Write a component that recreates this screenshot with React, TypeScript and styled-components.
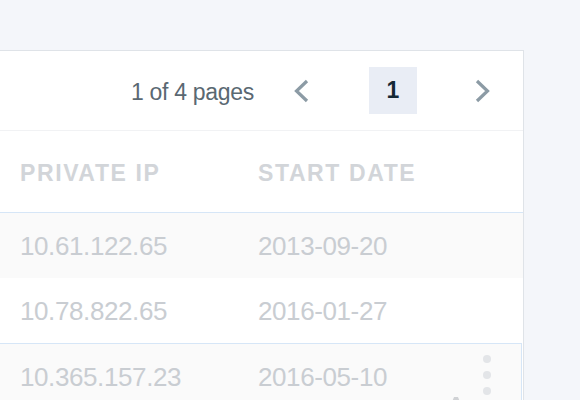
import React from "react";
import styled, { createGlobalStyle } from "styled-components";

const Global = createGlobalStyle`
  html, body { margin: 0; padding: 0; background: #f4f6fa; }
  body { font-family: "Liberation Sans", Arial, sans-serif; width: 580px; height: 400px; overflow: hidden; }
`;

const Page = styled.div`
  padding-top: 50px;
`;

const Panel = styled.section`
  width: 523px;
  background: #ffffff;
  border: 1px solid #dfe3e8;
  border-left: none;
  border-bottom: none;
  height: 360px;
  overflow: hidden;
`;

const Toolbar = styled.div`
  height: 79px;
  display: flex;
  align-items: center;
  justify-content: flex-end;
  padding-right: 16px;
  border-bottom: 1px solid #f1f2f4;
`;

const PageInfo = styled.span`
  font-size: 23px;
  color: #5a6872;
  margin-right: 23px;
  letter-spacing: -0.3px;
  padding-top: 3px;
`;

const NavButton = styled.button<{ $ml?: number }>`
  width: 48px;
  height: 47px;
  border: none;
  background: transparent;
  display: flex;
  align-items: center;
  justify-content: center;
  padding: 0;
  margin-left: ${(p) => p.$ml ?? 0}px;
`;

const PageBox = styled.div`
  width: 48px;
  height: 47px;
  margin-left: 44px;
  background: #e9edf5;
  display: flex;
  align-items: center;
  justify-content: center;
  font-size: 23px;
  font-weight: 700;
  color: #152935;
`;

const Row = styled.div<{ $head?: boolean; $alt?: boolean; $selected?: boolean }>`
  position: relative;
  display: grid;
  grid-template-columns: 238px 1fr;
  align-items: center;
  padding-left: 20px;
  height: ${(p) => (p.$head ? "81px" : "65px")};
  background: ${(p) => (p.$alt ? "#fafafa" : "#ffffff")};
  border-bottom: ${(p) => (p.$head ? "1px solid #d6e6f7" : "none")};
  ${(p) =>
    p.$selected
      ? `border-top: 1px solid #d6e6f7; border-right: 1px solid #d6e6f7; margin-right: 1px;`
      : ""}
`;

const HeadCell = styled.div`
  font-size: 23px;
  font-weight: 700;
  letter-spacing: 1.6px;
  color: #d2d5d9;
  text-transform: uppercase;
  padding-top: 4px;
`;

const Cell = styled.div`
  font-size: 26px;
  color: #c9cdd2;
  letter-spacing: -0.4px;
  padding-top: 2px;
`;

const Dots = styled.div`
  position: absolute;
  right: 30px;
  top: 11px;
  display: flex;
  flex-direction: column;
  gap: 8px;
`;

const Dot = styled.span`
  width: 8px;
  height: 8px;
  border-radius: 50%;
  background: #e3e5e8;
`;

const Caret = styled.svg`
  position: absolute;
  left: 451px;
  top: 52px;
`;

const Chevron = ({ dir }: { dir: "left" | "right" }) => (
  <svg width="18" height="24" viewBox="0 0 18 24">
    <path
      d={dir === "left" ? "M15 2 L4.5 12 L15 22" : "M3 2 L13.5 12 L3 22"}
      fill="none"
      stroke="#8c9ba5"
      strokeWidth="3.2"
    />
  </svg>
);

const rows = [
  { ip: "10.61.122.65", date: "2013-09-20" },
  { ip: "10.78.822.65", date: "2016-01-27" },
  { ip: "10.365.157.23", date: "2016-05-10" },
];

export default function App() {
  return (
    <>
      <Global />
      <Page>
        <Panel>
          <Toolbar>
            <PageInfo>1 of 4 pages</PageInfo>
            <NavButton aria-label="Previous page">
              <Chevron dir="left" />
            </NavButton>
            <PageBox>1</PageBox>
            <NavButton $ml={42} aria-label="Next page">
              <Chevron dir="right" />
            </NavButton>
          </Toolbar>
          <Row $head>
            <HeadCell>Private IP</HeadCell>
            <HeadCell>Start Date</HeadCell>
          </Row>
          {rows.map((r, i) => (
            <Row key={r.ip} $alt={i !== 1} $selected={i === 2}>
              <Cell>{r.ip}</Cell>
              <Cell>{r.date}</Cell>
              {i === 2 && (
                <>
                  <Dots>
                    <Dot />
                    <Dot />
                    <Dot />
                  </Dots>
                  <Caret width="10" height="6" viewBox="0 0 10 6">
                    <path d="M1 6 L3 1 H7 L9 6 Z" fill="#d0d2d5" />
                  </Caret>
                </>
              )}
            </Row>
          ))}
        </Panel>
      </Page>
    </>
  );
}
